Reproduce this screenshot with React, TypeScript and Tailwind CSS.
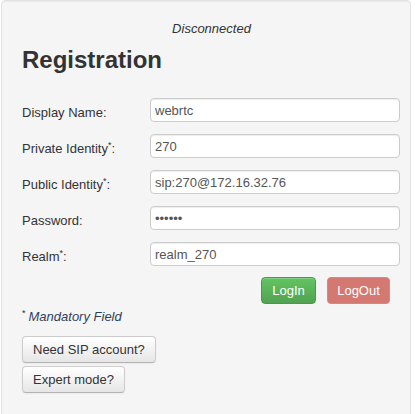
import React from "react";

const font = { fontFamily: '"Liberation Sans", Arial, sans-serif' };

function Row({ label, star, value, type = "text" }: { label: string; star?: boolean; value: string; type?: string }) {
  return (
    <div className="flex items-start h-[36px]">
      <label className="w-[128px] pt-[6px] text-[13px] leading-[18px] text-[#333]">
        {label}
        {star && <span className="text-[9px] leading-none relative -top-[5px]">*</span>}:
      </label>
      <input
        type={type}
        defaultValue={value}
        readOnly
        className="w-[250px] h-[24px] px-[4px] text-[13px] text-[#555] bg-white border border-[#ccc] rounded-[4px] shadow-[inset_0_1px_1px_rgba(0,0,0,0.075)] outline-none"
        style={font}
      />
    </div>
  );
}

export default function App() {
  return (
    <div className="w-[415px] h-[414px] bg-white overflow-hidden" style={font}>
      <div className="ml-[1px] w-[410px] h-[430px] bg-[#f5f5f5] border border-[#e3e3e3] rounded-[4px] shadow-[inset_0_1px_1px_rgba(0,0,0,0.05)] pl-[20px] pr-[9px]">
        <div className="pt-[19px] text-center italic text-[13px] leading-[18px] text-[#333]">Disconnected</div>
        <h2 className="mt-[8px] text-[24px] leading-[28px] font-bold text-[#333]">Registration</h2>
        <div className="mt-[24px] flex flex-col">
          <Row label="Display Name" value="webrtc" />
          <Row label="Private Identity" star value="270" />
          <Row label="Public Identity" star value="sip:270@172.16.32.76" />
          <Row label="Password" type="password" value="123456" />
          <Row label="Realm" star value="realm_270" />
        </div>
        <div className="flex justify-end gap-[11px] pr-[11px] -mt-[1px]">
          <button
            className="h-[27px] w-[55px] text-[13px] text-white rounded-[4px] border border-[#4a9a4a] bg-gradient-to-b from-[#62c462] to-[#51a351] shadow-[inset_0_1px_0_rgba(255,255,255,0.2)]"
            style={font}
          >
            LogIn
          </button>
          <button
            className="h-[27px] w-[63px] text-[13px] text-white rounded-[4px] border border-[#d08a86] bg-[#d47872]"
            style={font}
          >
            LogOut
          </button>
        </div>
        <div className="mt-[4px] text-[13px] leading-[18px] text-[#2e3f5c]">
          <span className="text-[9px] leading-none relative -top-[5px] text-[#333] mr-[3px]">*</span>
          <i>Mandatory Field</i>
        </div>
        <div className="mt-[10px] flex flex-col items-start gap-[3px]">
          <button
            className="h-[27px] px-[10px] text-[13px] text-[#333] rounded-[4px] border border-[#ccc] border-b-[#b3b3b3] bg-gradient-to-b from-white to-[#e6e6e6] shadow-[inset_0_1px_0_rgba(255,255,255,0.2),0_1px_2px_rgba(0,0,0,0.05)]"
            style={font}
          >
            Need SIP account?
          </button>
          <button
            className="h-[27px] px-[10px] text-[13px] text-[#333] rounded-[4px] border border-[#ccc] border-b-[#b3b3b3] bg-gradient-to-b from-white to-[#e6e6e6] shadow-[inset_0_1px_0_rgba(255,255,255,0.2),0_1px_2px_rgba(0,0,0,0.05)]"
            style={font}
          >
            Expert mode?
          </button>
        </div>
      </div>
    </div>
  );
}
